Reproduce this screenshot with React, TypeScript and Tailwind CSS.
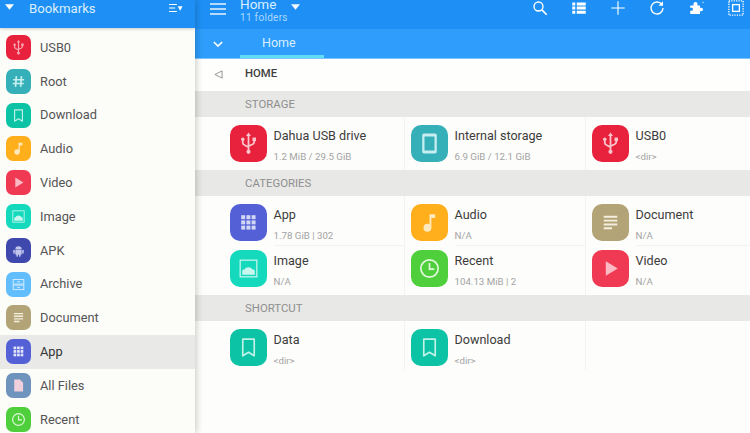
import React from "react";

type G = React.ReactNode;

const usb: G = (
  <g fill="none" stroke="currentColor" strokeWidth="1.7" strokeLinecap="round">
    <path d="M12 4v15M6.500 9v2.200c0 1.500 1 2 2 2.500l3.500 1.800M17.500 9v1.500c0 1.500-1 2-2 2.500L12 14.500" />
    <path d="M12 1.500l-2.400 3.200h4.800z" fill="currentColor" stroke="none" />
    <circle cx="12" cy="20" r="2" fill="currentColor" stroke="none" />
    <circle cx="6.500" cy="8" r="1.700" fill="currentColor" stroke="none" />
    <rect x="15.800" y="6.300" width="3.400" height="3.400" fill="currentColor" stroke="none" />
  </g>
);
const hash: G = (
  <path d="M9 4.500L7.800 19.500M16.200 4.500L15 19.500M4.500 9.500h15.500M4 14.800h15.500" fill="none" stroke="currentColor" strokeWidth="2.400" />
);
const bookmark: G = (
  <path d="M6.500 4h11v16L12 16.600 6.500 20z" fill="none" stroke="currentColor" strokeWidth="1.600" strokeLinejoin="round" />
);
const music: G = (
  <g fill="currentColor">
    <circle cx="10" cy="17" r="3.800" />
    <path d="M12 4h5.500v3.600H13.800V17H12z" />
  </g>
);
const play: G = <path d="M7.500 5l11.500 7-11.500 7z" fill="currentColor" />;
const image: G = (
  <g>
    <rect x="4" y="4" width="16" height="16" fill="none" stroke="currentColor" strokeWidth="1.200" />
    <path d="M6 18v-3.600c0-1 1-1.700 2-1.300.5-1.400 2-2.400 4-2.400s3.400 1 4 2.400c1-.4 2 .3 2 1.300V18z" fill="currentColor" />
  </g>
);
const android: G = (
  <g fill="currentColor">
    <path d="M7.500 10.500a4.500 4.500 0 019 0z" />
    <rect x="7.500" y="11.200" width="9" height="6.800" rx="1" />
    <rect x="4.600" y="11" width="2.200" height="5.600" rx="1.100" />
    <rect x="17.200" y="11" width="2.200" height="5.600" rx="1.100" />
    <rect x="9" y="17" width="2.200" height="4" rx="1.100" />
    <rect x="12.800" y="17" width="2.200" height="4" rx="1.100" />
  </g>
);
const archive: G = (
  <g fill="none" stroke="currentColor" strokeWidth="1.300">
    <rect x="4.500" y="5" width="15" height="6.400" />
    <rect x="4.500" y="12.800" width="15" height="6.400" />
    <path d="M10 8.200h4M10 16h4" />
  </g>
);
const doc: G = (
  <path d="M5.500 6.500h13M5.500 10.200h13M5.500 13.900h13M5.500 17.600h8" fill="none" stroke="currentColor" strokeWidth="1.900" />
);
const apps: G = (
  <g fill="currentColor">
    {[5, 10, 15].flatMap((y) =>
      [5, 10, 15].map((x) => <rect key={`${x}-${y}`} x={x} y={y} width="3.800" height="3.800" />),
    )}
  </g>
);
const file: G = <path d="M6 3.500h8l4.500 4.500v12.500H6z" fill="currentColor" />;
const clock: G = (
  <g fill="none" stroke="currentColor" strokeWidth="1.600">
    <circle cx="12" cy="12" r="8.300" />
    <path d="M12 6.800V12.600h4.600" />
  </g>
);
const tablet: G = (
  <g>
    <rect x="5" y="2.500" width="14" height="19" rx="1.600" fill="currentColor" />
    <rect x="7.200" y="5.300" width="9.600" height="13.400" fill="#35b0b8" />
  </g>
);

function Tile({ bg, size, children, fg }: { bg: string; size: number; children: G; fg: string }) {
  const box = size === 25 ? "w-[25px] h-[25px] rounded-[7px]" : "w-[36.500px] h-[36.500px] rounded-[10px]";
  const svg = size === 25 ? "w-[17px] h-[17px]" : "w-[25px] h-[25px]";
  return (
    <div className={`${box} shrink-0 flex items-center justify-center`} style={{ backgroundColor: bg, color: fg }}>
      <svg viewBox="0 0 24 24" className={svg}>
        {children}
      </svg>
    </div>
  );
}

const RED = "#e8213c";
const TEAL = "#35b0b8";
const GREEN = "#0dc3a5";
const ORANGE = "#ffae1c";
const PINK = "#f03a54";
const AQUA = "#14d9bd";
const GOLD = "#b3a477";
const INDIGO = "#5360d6";
const LIME = "#4fcf3c";

const side: [string, string, G, string][] = [
  ["USB0", RED, usb, "#f9a9b4"],
  ["Root", TEAL, hash, "#c6eef0"],
  ["Download", GREEN, bookmark, "#c0f2e8"],
  ["Audio", ORANGE, music, "#ffe9bd"],
  ["Video", PINK, play, "#fbb9c3"],
  ["Image", AQUA, image, "#c8f7ef"],
  ["APK", "#3f48ac", android, "#c3c7ee"],
  ["Archive", "#62bdfc", archive, "#d5edff"],
  ["Document", GOLD, doc, "#f3eedd"],
  ["App", INDIGO, apps, "#e3e6fb"],
  ["All Files", "#6e93bd", file, "#f0cfdc"],
  ["Recent", LIME, clock, "#e3f9de"],
];

type Item = { t: string; s: string; bg: string; g: G; fg: string };

function Cell({ it, last, bottom, pad }: { it: Item; last?: boolean; bottom?: boolean; pad: string }) {
  return (
    <div className={`${last ? "w-[164px]" : "w-[181px] border-r border-[#f3f3f0]"} h-full shrink-0 flex items-start pl-[6px] ${pad}`}>
      <Tile bg={it.bg} size={37} fg={it.fg}>
        {it.g}
      </Tile>
      <div className={`ml-[7px] h-full flex-1 flex flex-col ${bottom ? "border-b border-[#f3f3f0]" : ""}`}>
        <div className="mt-[1.500px] text-[12.600px] leading-[17px] text-[#3c3c3c] whitespace-nowrap">{it.t}</div>
        <div className="text-[9.700px] leading-[13px] mt-[6px] text-[#a3a3a3] whitespace-nowrap">{it.s}</div>
      </div>
    </div>
  );
}

function Row({ items, h, pad, bottom }: { items: Item[]; h: string; pad: string; bottom?: boolean }) {
  return (
    <div className={`${h} flex pl-[29px]`}>
      {items.map((it, i) => (
        <Cell key={i} it={it} last={i === 2} bottom={bottom} pad={pad} />
      ))}
    </div>
  );
}

function Band({ t, h }: { t: string; h: string }) {
  return (
    <div className={`${h} bg-[#e8e8e6] flex items-center pl-[50px] pt-[1px] text-[11.400px] text-[#8f8f8f]`}>{t}</div>
  );
}

function TopIcon({ children }: { children: G }) {
  return (
    <svg viewBox="0 0 24 24" className="w-[18px] h-[18px] text-white" fill="none" stroke="currentColor">
      {children}
    </svg>
  );
}

export default function App() {
  return (
    <div
      className="w-[750px] h-[433px] overflow-hidden flex bg-[#fdfdfb]"
      style={{ fontFamily: "Roboto, 'Noto Sans', sans-serif" }}
    >
      {/* Sidebar */}
      <aside className="w-[195px] h-full shrink-0 flex flex-col bg-[#fcfcf9] shadow-[2px_0_6px_rgba(0,0,0,0.18)] z-10 overflow-hidden">
        <div className="h-[28px] shrink-0 bg-[#1e90f5] flex items-start shadow-[0_1px_3px_rgba(0,0,0,0.2)]">
          <svg viewBox="0 0 10 6" className="w-[9px] h-[6px] ml-[5px] mt-[4px] text-white">
            <path d="M0 0h10L5 6z" fill="currentColor" />
          </svg>
          <span className="ml-[15px] text-[13.200px] leading-[17px] whitespace-nowrap text-[#d9eeff]">Bookmarks</span>
          <svg viewBox="0 0 16 10" className="w-[14px] h-[10px] ml-[73px] mt-[3px] text-white">
            <path d="M0 1h9M0 5h7M0 9h9" stroke="currentColor" strokeWidth="1.400" fill="none" />
            <path d="M10 3h5.500l-2.750 5z" fill="currentColor" />
          </svg>
        </div>
        <div className="pt-[2.600px]">
          {side.map(([t, bg, g, fg]) => (
            <div
              key={t}
              className={`h-[33.800px] flex items-center pl-[6px] ${t === "App" ? "bg-[#e9e9e7]" : ""}`}
            >
              <Tile bg={bg} size={25} fg={fg}>
                {g}
              </Tile>
              <span className={`ml-[9px] text-[12.800px] ${t === "App" ? "text-[#333333]" : "text-[#555555]"}`}>{t}</span>
            </div>
          ))}
        </div>
      </aside>

      {/* Main */}
      <main className="flex-1 h-full flex flex-col min-w-0">
        <div className="h-[29px] shrink-0 bg-[#1e90f5] flex items-start overflow-hidden">
          <svg viewBox="0 0 16 12" className="w-[16px] h-[12px] ml-[15px] mt-[3px] shrink-0">
            <path d="M0 1h16M0 6h16M0 11h16" stroke="#e6f4ff" strokeWidth="1.400" />
          </svg>
          <div className="ml-[14px] -mt-[3px] flex flex-col whitespace-nowrap shrink-0">
            <span className="text-[13.500px] leading-[15px] h-[15px] text-[#d9eeff]">Home</span>
            <span className="text-[10px] leading-[12px] tracking-[0.300px] text-[#a9d8fd]">11 folders</span>
          </div>
          <svg viewBox="0 0 10 6" className="w-[9px] h-[6px] ml-[3px] mt-[4px] shrink-0">
            <path d="M0 0h10L5 6z" fill="#f2f9ff" />
          </svg>
          <div className="ml-[231px] w-[214px] -mt-[1px] flex justify-between shrink-0">
            <TopIcon>
              <circle cx="10" cy="10" r="6" strokeWidth="1.800" />
              <path d="M14.500 14.500L21 21" strokeWidth="2.200" />
            </TopIcon>
            <TopIcon>
              <path d="M3 6.500h4M9 6.500h12M3 12h4M9 12h12M3 17.500h4M9 17.500h12" strokeWidth="4" />
            </TopIcon>
            <TopIcon>
              <path d="M12 3v18M3 12h18" strokeWidth="1.500" />
            </TopIcon>
            <TopIcon>
              <path d="M18.600 7.500A8 8 0 1020 12" strokeWidth="1.800" />
              <path d="M20 3v6h-6z" fill="currentColor" stroke="none" />
            </TopIcon>
            <TopIcon>
              <path
                d="M3 8.500h4.500c-1-3 1-4.500 2.500-4.500s3.500 1.500 2.500 4.500H16v3.500c2.500-1 4 .5 4 2s-1.500 3-4 2V20H3v-4.500c2.500 1 3.500-.5 3.500-2S5.500 11 3 12z"
                fill="currentColor"
                stroke="none"
              />
              <path d="M19 3.500l2 .5-1 2z" fill="currentColor" stroke="none" />
            </TopIcon>
            <TopIcon>
              <path d="M2.500 2.500h19v19h-19z" strokeWidth="1.800" strokeDasharray="1.600 1.600" />
              <rect x="7.500" y="7.500" width="9" height="9" strokeWidth="1.800" />
            </TopIcon>
          </div>
        </div>

        <div className="h-[30px] shrink-0 bg-[#2e9dfb] flex border-b border-[#7fc5fb]">
          <svg viewBox="0 0 12 8" className="w-[10px] h-[7px] ml-[18px] mt-[12px]">
            <path d="M1 1l5 5 5-5" fill="none" stroke="#ffffff" strokeWidth="2" />
          </svg>
          <div className="ml-[17px] w-[84px] h-[29px] border-b-[3px] border-[#62dcf5] flex items-center pl-[22px] text-[12.500px] text-[#d8eeff] pt-[3px]">
            Home
          </div>
        </div>

        <div className="h-[32px] shrink-0 flex items-center bg-[#fefefc] pb-[1px]">
          <svg viewBox="0 0 10 10" className="w-[9px] h-[9px] ml-[19px]">
            <path d="M9 1v8L1 5z" fill="none" stroke="#8a8a8a" strokeWidth="1" />
          </svg>
          <span className="ml-[22px] text-[11.300px] text-[#3f3f3f] font-medium">HOME</span>
        </div>

        <Band t="STORAGE" h="h-[26px] shrink-0" />
        <Row
          h="h-[53px] shrink-0"
          pad="pt-[8px]"
          items={[
            { t: "Dahua USB drive", s: "1.2 MiB / 29.5 GiB", bg: RED, g: usb, fg: "#fbc3cb" },
            { t: "Internal storage", s: "6.9 GiB / 12.1 GiB", bg: TEAL, g: tablet, fg: "#c6eef0" },
            { t: "USB0", s: "<dir>", bg: RED, g: usb, fg: "#fbc3cb" },
          ]}
        />
        <Band t="CATEGORIES" h="h-[26px] shrink-0" />
        <Row
          h="h-[50px] shrink-0"
          pad="pt-[8px]"
          bottom
          items={[
            { t: "App", s: "1.78 GiB | 302", bg: INDIGO, g: apps, fg: "#d3d7f6" },
            { t: "Audio", s: "N/A", bg: ORANGE, g: music, fg: "#ffe9bd" },
            { t: "Document", s: "N/A", bg: GOLD, g: doc, fg: "#f3eedd" },
          ]}
        />
        <Row
          h="h-[49px] shrink-0"
          pad="pt-[4px]"
          items={[
            { t: "Image", s: "N/A", bg: AQUA, g: image, fg: "#c8f7ef" },
            { t: "Recent", s: "104.13 MiB | 2", bg: LIME, g: clock, fg: "#e3f9de" },
            { t: "Video", s: "N/A", bg: PINK, g: play, fg: "#fbb9c3" },
          ]}
        />
        <Band t="SHORTCUT" h="h-[26px] shrink-0" />
        <Row
          h="h-[49px] shrink-0"
          pad="pt-[8px]"
          items={[
            { t: "Data", s: "<dir>", bg: GREEN, g: bookmark, fg: "#c0f2e8" },
            { t: "Download", s: "<dir>", bg: GREEN, g: bookmark, fg: "#c0f2e8" },
          ]}
        />
      </main>
    </div>
  );
}
